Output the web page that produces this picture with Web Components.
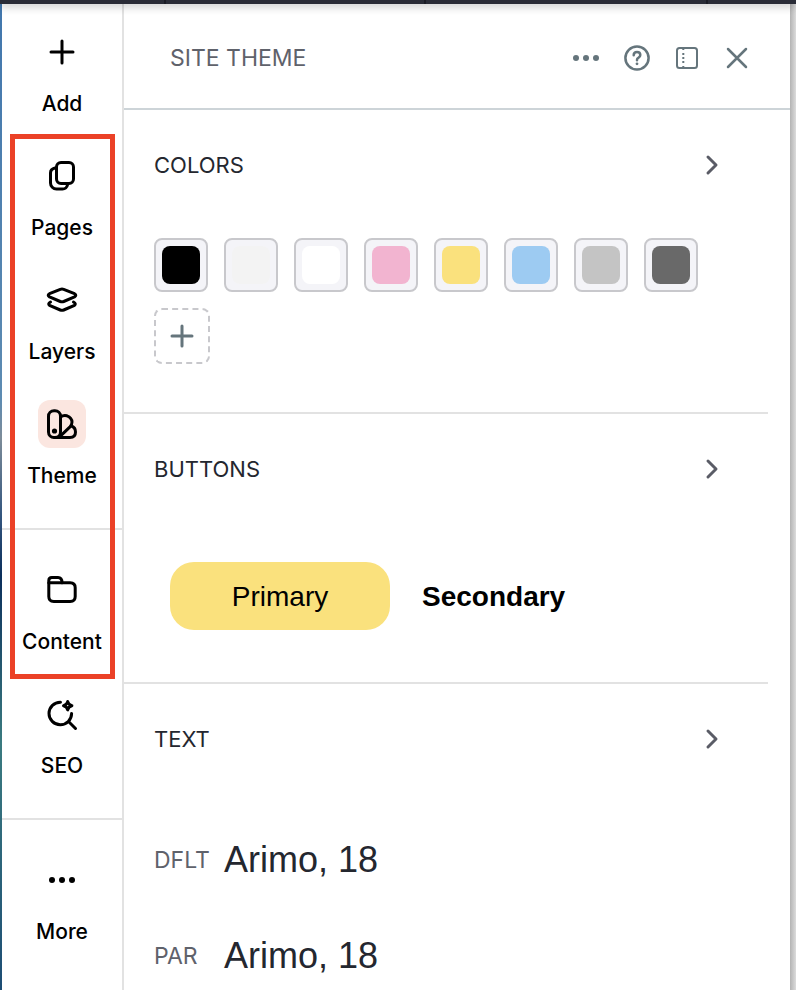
<!DOCTYPE html>
<html lang="en">
<head>
<meta charset="utf-8">
<meta name="viewport" content="width=device-width, initial-scale=1">
<title>Site Theme</title>
<style>
  body {
    margin: 0;
    font-family: Inter, "Open Sans", sans-serif;
    color: #24272f;
    background: #fff;
  }
</style>
</head>
<body>

<editor-app>
  <editor-rail slot="rail">
    <rail-group>
      <rail-item icon="add">Add</rail-item>
      <rail-item icon="pages">Pages</rail-item>
      <rail-item icon="layers">Layers</rail-item>
      <rail-item icon="theme" selected>Theme</rail-item>
    </rail-group>
    <rail-group>
      <rail-item icon="content">Content</rail-item>
      <rail-item icon="seo">SEO</rail-item>
    </rail-group>
    <rail-group>
      <rail-item icon="more">More</rail-item>
    </rail-group>
  </editor-rail>

  <theme-panel heading="SITE THEME">
    <theme-section heading="COLORS">
      <color-palette colors="#000000 #f3f3f3 #ffffff #f2b4d0 #fae17d #9dcbf2 #c4c4c4 #696969"></color-palette>
    </theme-section>
    <theme-section heading="BUTTONS">
      <button-samples></button-samples>
    </theme-section>
    <theme-section heading="TEXT">
      <text-style tag="DFLT">Arimo, 18</text-style>
      <text-style tag="PAR">Arimo, 18</text-style>
    </theme-section>
  </theme-panel>
</editor-app>

<script>
const railIcons = {
  add: `<path d="M24 13v22M13 24h22"/>`,
  pages: `<rect x="18.5" y="10.5" width="17" height="21" rx="4.5"/>
    <path d="M17 16q-4.5 1-4.5 5v10a6 6 0 0 0 6 6h6q4 0 5-4"/>`,
  layers: `<path d="M22.3 13.3L11.5 17.7q-2.6 1.6 0 3.2l10.8 4.6q1.7.6 3.4 0l10.8-4.6q2.6-1.6 0-3.2l-10.8-4.4q-1.7-.6-3.4 0z"/>
    <path d="M12.5 26q-3 1.7-1 3.3l10.800 4.700q1.7.6 3.4 0l10.8-4.7q2-1.6-1-3.3"/>`,
  theme: `<rect x="10.5" y="10.7" width="12" height="26.8" rx="5.5"/>
    <path d="M22.5 17q3-2.2 6.5-1.2 4.8 1.7 5 6.2 0 2.800-2 4.800L21 37.300"/>
    <path d="M33.5 26q4 1.5 4 6 0 5.5-5.5 5.5H17"/>
    <circle cx="16.5" cy="31" r="2.6" fill="currentColor" stroke="none"/>`,
  content: `<path d="M10.8 16.700V14.5q0-3 3-3h6.2q4 0 4 5.2"/>
    <path d="M10.8 16.7h21.4q5 0 5 5v8.800q0 5-5 5H15.800q-5 0-5-5z"/>`,
  seo: `<path d="M22.5 12.200a11.300 11.300 0 1 0 11.100 11.300M30.500 31.500l7 7"/>
    <path d="M29.7 11.5q.8 3.400 4.200 4.200-3.400.8-4.200 4.200-.8-3.400-4.200-4.200 3.400-.8 4.200-4.200z"/>`,
  more: `<g fill="currentColor" stroke="none"><circle cx="14" cy="24" r="3"/><circle cx="24" cy="24" r="3"/><circle cx="34" cy="24" r="3"/></g>`
};

const toolIcons = {
  More: `<g fill="currentColor" stroke="none"><circle cx="3" cy="14" r="3"/><circle cx="13" cy="14" r="3"/><circle cx="23" cy="14" r="3"/></g>`,
  Help: `<circle cx="14" cy="14" r="11.6"/>
    <path d="M10.700 11.300q0-3.300 3.300-3.300t3.300 3q0 1.700-1.700 2.600T14 15.800v.4"/>
    <circle cx="14" cy="19.8" r="1.4" fill="currentColor" stroke="none"/>`,
  Dock: `<g stroke-width="2"><rect x="4" y="4" width="20" height="20" rx="2.5"/>
    <path d="M10.300 4v2M10.300 9v2M10.300 13v2M10.300 17v2M10.300 22v2" stroke-linecap="butt"/></g>`,
  Close: `<path d="M5 5l18 18M23 5L5 23"/>`
};

class Base extends HTMLElement {
  constructor() {
    super();
    this.attachShadow({ mode: 'open' });
  }

  connectedCallback() {
    this.shadowRoot.innerHTML = `${this.css()}${this.html()}`;
  }
}

customElements.define('editor-app', class extends Base {
  html() {
    return `
      <div class="bar"><i></i><i></i><i></i><i></i></div>
      <div class="main">
        <slot name="rail"></slot>
        <slot></slot>
      </div>`;
  }

  css() {
    return `<style>
      :host {
        display: flex;
        flex-direction: column;
        height: 100vh;
        overflow: hidden;
      }
      .bar {
        display: grid;
        grid-template-columns: 164fr 260fr 282fr 90fr;
        flex: none;
        height: 4px;
        background: #2a2c37;
        box-shadow: 0 1px 10px rgba(0, 0, 0, .4);
        z-index: 1;
      }
      .bar i + i {
        border-left: 2px solid #1b1c25;
      }
      .main {
        display: flex;
        flex: 1;
        min-height: 0;
        padding: 0 6px 0 2px;
        background:
          linear-gradient(to right, #b3b3b3, #dcdcdc) right / 6px 100% no-repeat,
          linear-gradient(#4277ad, #5d8bb2 40%, #7d8c99 44%, #33557e 52%, #0c2f5c 58%, #3b7b80 75%, #1d4d74) left / 2px 100% no-repeat;
      }
    </style>`;
  }
});

customElements.define('editor-rail', class extends Base {
  html() {
    return `<nav aria-label="Editor"><slot></slot></nav><div class="frame"></div>`;
  }

  css() {
    return `<style>
      :host {
        position: relative;
        flex: none;
        width: 120px;
        background: #fff;
        border-right: 2px solid #e2e2e2;
      }
      .frame {
        position: absolute;
        top: 130px;
        left: 8px;
        right: 7px;
        height: 545px;
        box-sizing: border-box;
        border: 5px solid #eb4127;
        pointer-events: none;
      }
    </style>`;
  }
});

customElements.define('rail-group', class extends Base {
  html() {
    return `<slot></slot>`;
  }

  css() {
    return `<style>
      :host {
        display: block;
        padding: 24px 0 16px;
      }
      :host(:first-child) {
        padding-top: 12px;
      }
      :host(:not(:last-child)) {
        border-bottom: 2px solid #e2e2e2;
      }
    </style>`;
  }
});

customElements.define('rail-item', class extends Base {
  html() {
    return `<button type="button">
      <svg viewBox="0 0 48 48" aria-hidden="true">${railIcons[this.getAttribute('icon')]}</svg>
      <span><slot></slot></span>
    </button>`;
  }

  css() {
    return `<style>
      :host {
        display: block;
      }
      button {
        display: flex;
        flex-direction: column;
        align-items: center;
        gap: 12px;
        width: 100%;
        padding: 12px 0 20px;
        border: 0;
        background: none;
        color: #000;
        font: 500 21px/32px Inter, sans-serif;
        cursor: pointer;
      }
      svg {
        width: 48px;
        height: 48px;
        border-radius: 12px;
        fill: none;
        stroke: currentColor;
        stroke-width: 3;
        stroke-linecap: round;
        stroke-linejoin: round;
      }
      :host([selected]) svg {
        background: #fbe6e0;
      }
    </style>`;
  }
});

customElements.define('theme-panel', class extends Base {
  html() {
    return `
      <header>
        <h1>${this.getAttribute('heading')}</h1>
        ${Object.keys(toolIcons).map(it => `
          <button type="button" aria-label="${it}">
            <svg viewBox="0 0 28 28">${toolIcons[it]}</svg>
          </button>`).join('')}
      </header>
      <div class="body"><slot></slot></div>`;
  }

  css() {
    return `<style>
      :host {
        display: flex;
        flex-direction: column;
        flex: 1;
        min-width: 0;
        background: #fff;
      }
      header {
        display: flex;
        align-items: center;
        flex: none;
        height: 100px;
        padding: 4px 28px 0 46px;
        border-bottom: 2px solid #cdd4d8;
      }
      h1 {
        flex: 1;
        margin: 0;
        font-size: 23px;
        font-weight: 400;
        line-height: 32px;
        color: #5f626b;
      }
      button {
        display: flex;
        justify-content: center;
        width: 50px;
        padding: 11px 0;
        border: 0;
        background: none;
        color: #65757c;
        cursor: pointer;
      }
      svg {
        width: 28px;
        height: 28px;
        fill: none;
        stroke: currentColor;
        stroke-width: 2.5;
        stroke-linecap: round;
      }
      .body {
        flex: 1;
        min-height: 0;
        padding-right: 22px;
        overflow-y: auto;
        scrollbar-width: none;
      }
    </style>`;
  }
});

customElements.define('theme-section', class extends Base {
  html() {
    return `
      <h2><button type="button">
        ${this.getAttribute('heading')}
        <svg viewBox="0 0 24 24" aria-hidden="true"><path d="M8 4l8 8-8 8"/></svg>
      </button></h2>
      <slot></slot>`;
  }

  css() {
    return `<style>
      :host {
        display: block;
      }
      :host(:not(:last-child)) {
        border-bottom: 2px solid #e2e2e2;
      }
      h2 {
        margin: 0;
      }
      button {
        display: flex;
        align-items: center;
        justify-content: space-between;
        width: 100%;
        height: 110px;
        padding: 0 44px 0 30px;
        border: 0;
        background: none;
        color: #24272f;
        font: 400 22px/32px Inter, sans-serif;
        cursor: pointer;
      }
      svg {
        width: 24px;
        height: 24px;
        fill: none;
        stroke: #5a5c66;
        stroke-width: 3;
        stroke-linecap: round;
        stroke-linejoin: round;
      }
    </style>`;
  }
});

customElements.define('color-palette', class extends Base {
  html() {
    const colors = this.getAttribute('colors').split(' ');
    return `
      ${colors.map(it => `<button type="button" aria-label="${it}"><i style="background: ${it}"></i></button>`).join('')}
      <button type="button" class="add" aria-label="Add color">
        <svg viewBox="0 0 24 24"><path d="M12 2v20M2 12h20"/></svg>
      </button>`;
  }

  css() {
    return `<style>
      :host {
        display: flex;
        flex-wrap: wrap;
        gap: 16px;
        padding: 18px 30px 48px;
      }
      button {
        display: flex;
        align-items: center;
        justify-content: center;
        box-sizing: border-box;
        width: 54px;
        height: 54px;
        padding: 0;
        border: 2px solid #c8c8cc;
        border-radius: 8px;
        background: #f4f4f8;
        cursor: pointer;
      }
      i {
        width: 38px;
        height: 38px;
        border-radius: 8px;
      }
      .add {
        width: 56px;
        height: 56px;
        border-style: dashed;
        background: none;
      }
      svg {
        width: 24px;
        height: 24px;
        stroke: #65757c;
        stroke-width: 3;
        stroke-linecap: round;
      }
    </style>`;
  }
});

customElements.define('button-samples', class extends Base {
  html() {
    return `
      <button type="button" class="primary">Primary</button>
      <button type="button" class="secondary">Secondary</button>`;
  }

  css() {
    return `<style>
      :host {
        display: flex;
        gap: 32px;
        padding: 38px 46px 52px;
      }
      button {
        height: 68px;
        padding: 2px 0 0;
        border: 0;
        border-radius: 24px;
        background: none;
        color: #000;
        font: 28px/32px "Liberation Sans", Arial, sans-serif;
        cursor: pointer;
      }
      .primary {
        width: 220px;
        background: #fae17d;
      }
      .secondary {
        font-weight: bold;
      }
    </style>`;
  }
});

customElements.define('text-style', class extends Base {
  html() {
    return `<small>${this.getAttribute('tag')}</small><span><slot></slot></span>`;
  }

  css() {
    return `<style>
      :host {
        display: flex;
        align-items: center;
        height: 96px;
        padding: 0 30px;
      }
      :host(:first-child) {
        padding-top: 18px;
      }
      small {
        flex: none;
        width: 70px;
        font-size: 23px;
        line-height: 32px;
        color: #5f626b;
      }
      span {
        font: 36px/40px "Liberation Sans", Arial, sans-serif;
      }
    </style>`;
  }
});
</script>
</body>
</html>
